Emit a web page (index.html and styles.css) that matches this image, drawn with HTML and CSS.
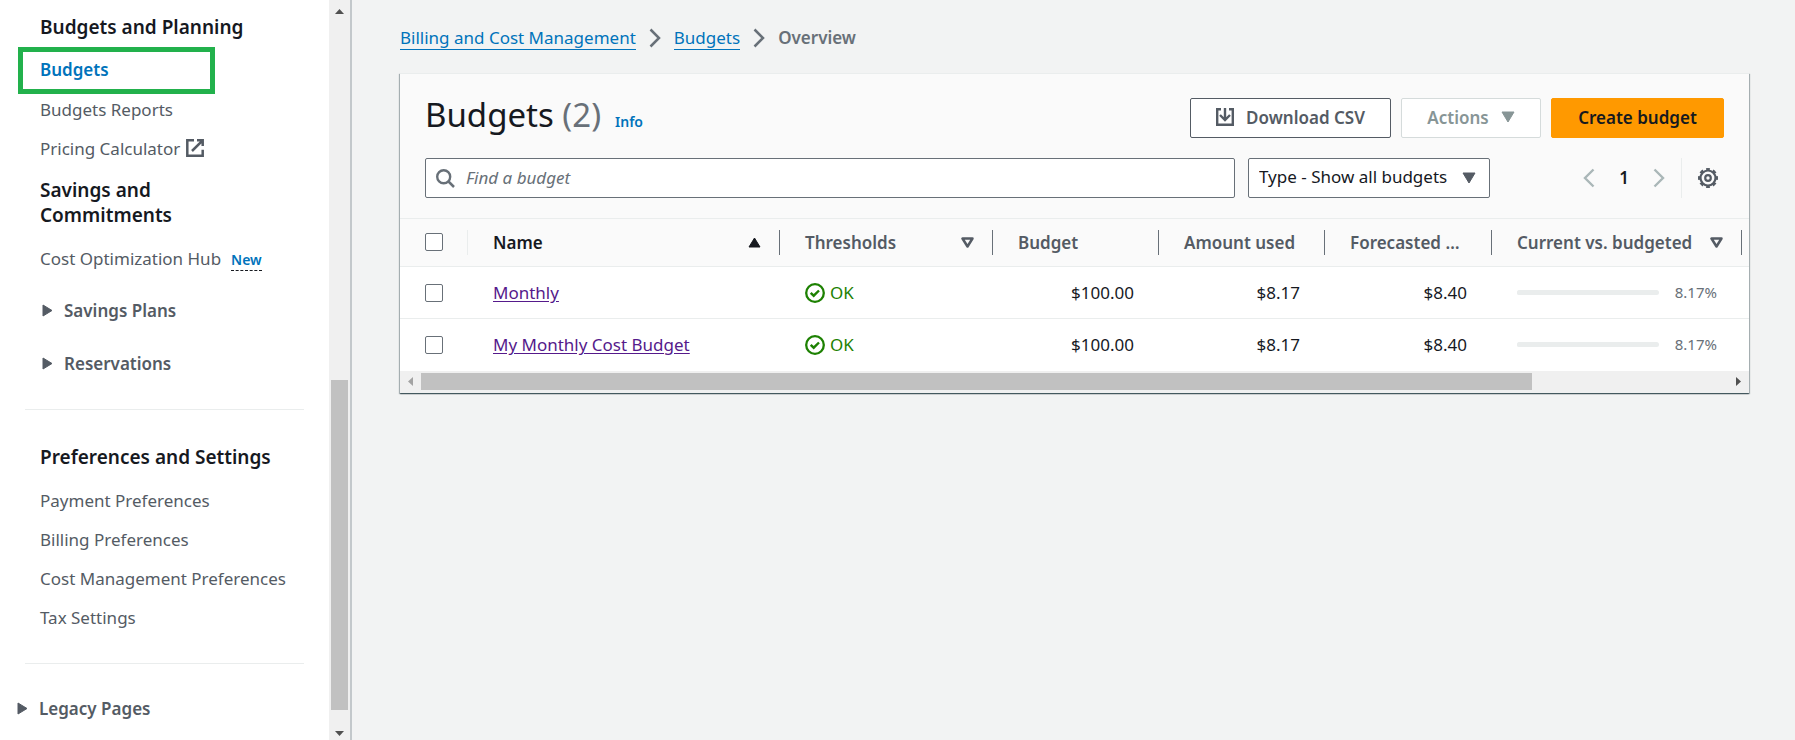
FILE: index.html
```html
<!DOCTYPE html>
<html lang="en">
<head>
<meta charset="utf-8">
<meta name="viewport" content="width=device-width, initial-scale=1">
<title>Budgets - Billing and Cost Management</title>
<link rel="stylesheet" href="styles.css">
</head>
<body>
<div class="app">
  <aside class="sidebar">
    <nav class="nav" aria-label="Billing and Cost Management">
      <section class="nav-section">
        <h2 class="nav-heading">Budgets and Planning</h2>
        <ul class="nav-list">
          <li><a class="nav-link nav-link-active" href="#" aria-current="page">Budgets</a></li>
          <li><a class="nav-link" href="#">Budgets Reports</a></li>
          <li><a class="nav-link" href="#">Pricing Calculator
            <svg class="icon-external" viewBox="0 0 18 18" aria-hidden="true"><path d="M8 1.300H1.300v15.400h15.400v-6M11 1.300h5.700v5.700M16.700 1.300 6 12" fill="none" stroke="currentColor" stroke-width="2.500"/></svg></a></li>
        </ul>
      </section>
      <section class="nav-section nav-section-savings">
        <h2 class="nav-heading nav-heading-narrow">Savings and Commitments</h2>
        <ul class="nav-list">
          <li><a class="nav-link" href="#">Cost Optimization Hub</a><button class="new-tag" type="button">New</button></li>
        </ul>
        <button class="nav-group" type="button" aria-expanded="false"><svg class="caret" viewBox="0 0 11 13" aria-hidden="true"><path d="M1 1v11l9-5.500z" fill="currentColor" stroke="currentColor" stroke-linejoin="round"/></svg>Savings Plans</button>
        <button class="nav-group" type="button" aria-expanded="false"><svg class="caret" viewBox="0 0 11 13" aria-hidden="true"><path d="M1 1v11l9-5.500z" fill="currentColor" stroke="currentColor" stroke-linejoin="round"/></svg>Reservations</button>
      </section>
      <hr class="nav-divider">
      <section class="nav-section nav-section-prefs">
        <h2 class="nav-heading">Preferences and Settings</h2>
        <ul class="nav-list">
          <li><a class="nav-link" href="#">Payment Preferences</a></li>
          <li><a class="nav-link" href="#">Billing Preferences</a></li>
          <li><a class="nav-link" href="#">Cost Management Preferences</a></li>
          <li><a class="nav-link" href="#">Tax Settings</a></li>
        </ul>
      </section>
      <hr class="nav-divider">
      <button class="nav-group nav-group-root" type="button" aria-expanded="false"><svg class="caret" viewBox="0 0 11 13" aria-hidden="true"><path d="M1 1v11l9-5.500z" fill="currentColor" stroke="currentColor" stroke-linejoin="round"/></svg>Legacy Pages</button>
    </nav>
    <div class="vscroll" aria-hidden="true">
      <svg class="vscroll-arrow" viewBox="0 0 9 5"><path d="M0 5h9L4.500 0z" fill="#505050"/></svg>
      <div class="vscroll-track"><div class="vscroll-thumb"></div></div>
      <svg class="vscroll-arrow" viewBox="0 0 9 5"><path d="M0 0h9L4.500 5z" fill="#505050"/></svg>
    </div>
  </aside>

  <main class="main">
    <nav class="breadcrumbs" aria-label="Breadcrumbs">
      <a class="crumb" href="#">Billing and Cost Management</a>
      <svg class="crumb-sep" viewBox="0 0 12 20" aria-hidden="true"><path d="M1.500 1.500 10 10l-8.500 8.500" fill="none" stroke="currentColor" stroke-width="2.500"/></svg>
      <a class="crumb" href="#">Budgets</a>
      <svg class="crumb-sep" viewBox="0 0 12 20" aria-hidden="true"><path d="M1.500 1.500 10 10l-8.500 8.500" fill="none" stroke="currentColor" stroke-width="2.500"/></svg>
      <span class="crumb-current">Overview</span>
    </nav>

    <section class="panel">
      <header class="panel-header">
        <div class="title-row">
          <h1 class="title">Budgets <span class="count">(2)</span></h1>
          <a class="info" href="#">Info</a>
          <div class="actions">
            <button class="btn btn-download" type="button">
              <svg class="icon-download" viewBox="0 0 18 18" aria-hidden="true"><path d="M5 1.200H1.200v15.600h15.600V1.200H13M9 0v11.500M4 7l5 5 5-5" fill="none" stroke="currentColor" stroke-width="2.400"/></svg>
              Download CSV</button>
            <button class="btn btn-disabled" type="button" disabled>Actions
              <svg class="caret-down" viewBox="0 0 14 12" aria-hidden="true"><path d="M1 1h12L7 11z" fill="currentColor" stroke="currentColor" stroke-linejoin="round"/></svg></button>
            <button class="btn btn-primary" type="button">Create budget</button>
          </div>
        </div>
        <div class="tools">
          <label class="search">
            <svg class="icon-search" viewBox="0 0 19 19" aria-hidden="true"><circle cx="7.700" cy="7.700" r="6.500" fill="none" stroke="currentColor" stroke-width="2.400"/><path d="m12.500 12.500 5.500 5.500" stroke="currentColor" stroke-width="2.500"/></svg>
            <input class="search-input" type="text" placeholder="Find a budget" aria-label="Find a budget">
          </label>
          <div class="select-wrap">
            <select class="select" aria-label="Budget type"><option>Type - Show all budgets</option></select>
            <svg class="caret-down select-caret" viewBox="0 0 14 12" aria-hidden="true"><path d="M1 1h12L7 11z" fill="currentColor" stroke="currentColor" stroke-linejoin="round"/></svg>
          </div>
          <div class="pager">
            <button class="icon-btn" type="button" aria-label="Previous page" disabled><svg class="chevron" viewBox="0 0 12 20"><path d="M10.500 1.500 2 10l8.500 8.500" fill="none" stroke="currentColor" stroke-width="2.400"/></svg></button>
            <button class="page" type="button">1</button>
            <button class="icon-btn" type="button" aria-label="Next page" disabled><svg class="chevron" viewBox="0 0 12 20"><path d="M1.500 1.500 10 10l-8.500 8.500" fill="none" stroke="currentColor" stroke-width="2.400"/></svg></button>
          </div>
          <div class="prefs">
            <button class="icon-btn icon-btn-dark" type="button" aria-label="Preferences"><svg class="icon-gear" viewBox="0 0 20 20" fill="none" stroke="currentColor"><circle cx="10" cy="10" r="7.500" stroke-width="2.200"/><circle cx="10" cy="10" r="8.900" stroke-width="2.200" pathLength="160" stroke-dasharray="11 9" stroke-dashoffset="5.500"/><circle cx="10" cy="10" r="2.800" stroke-width="2.200"/></svg></button>
          </div>
        </div>
      </header>

      <table class="table">
        <colgroup><col class="c-check"><col class="c-name"><col class="c-thresh"><col class="c-num"><col class="c-num"><col class="c-forecast"><col class="c-current"><col class="c-more"></colgroup>
        <thead>
          <tr>
            <th class="th-check"><input class="check" type="checkbox" aria-label="Select all budgets"></th>
            <th><div class="th-inner th-sorted">Name<svg class="sort" viewBox="0 0 13 11" aria-hidden="true"><path d="M1 10h11L6.500 1z" fill="currentColor" stroke="currentColor" stroke-linejoin="round"/></svg></div></th>
            <th><div class="th-inner">Thresholds<svg class="sort" viewBox="0 0 13 11" aria-hidden="true"><path d="M1.500 1.500h10l-5 8z" fill="none" stroke="currentColor" stroke-width="2.500" stroke-linejoin="round"/></svg></div></th>
            <th><div class="th-inner">Budget</div></th>
            <th><div class="th-inner">Amount used</div></th>
            <th><div class="th-inner">Forecasted …</div></th>
            <th><div class="th-inner">Current vs. budgeted<svg class="sort" viewBox="0 0 13 11" aria-hidden="true"><path d="M1.500 1.500h10l-5 8z" fill="none" stroke="currentColor" stroke-width="2.500" stroke-linejoin="round"/></svg></div></th>
            <td></td>
          </tr>
        </thead>
        <tbody>
          <tr>
            <td><input class="check" type="checkbox" aria-label="Select Monthly"></td>
            <td><a class="budget-link" href="#">Monthly</a></td>
            <td><span class="status"><svg class="icon-ok" viewBox="0 0 20 20" aria-hidden="true"><circle cx="10" cy="10" r="8.800" fill="none" stroke="currentColor" stroke-width="2.300"/><path d="m5.700 9.800 3 2.900 5.300-5.200" fill="none" stroke="currentColor" stroke-width="2.400"/></svg>OK</span></td>
            <td class="num">$100.00</td>
            <td class="num">$8.17</td>
            <td class="num">$8.40</td>
            <td><div class="usage"><progress class="bar" max="100" value="8.17" aria-label="Current vs. budgeted"></progress><span class="pct">8.17%</span></div></td>
            <td></td>
          </tr>
          <tr>
            <td><input class="check" type="checkbox" aria-label="Select My Monthly Cost Budget"></td>
            <td><a class="budget-link" href="#">My Monthly Cost Budget</a></td>
            <td><span class="status"><svg class="icon-ok" viewBox="0 0 20 20" aria-hidden="true"><circle cx="10" cy="10" r="8.800" fill="none" stroke="currentColor" stroke-width="2.300"/><path d="m5.700 9.800 3 2.900 5.300-5.200" fill="none" stroke="currentColor" stroke-width="2.400"/></svg>OK</span></td>
            <td class="num">$100.00</td>
            <td class="num">$8.17</td>
            <td class="num">$8.40</td>
            <td><div class="usage"><progress class="bar" max="100" value="8.17" aria-label="Current vs. budgeted"></progress><span class="pct">8.17%</span></div></td>
            <td></td>
          </tr>
        </tbody>
      </table>
      <div class="hscroll" aria-hidden="true">
        <svg class="hscroll-arrow" viewBox="0 0 5 9"><path d="M5 0v9L0 4.500z" fill="#a3a3a3"/></svg>
        <div class="hscroll-track"><div class="hscroll-thumb"></div></div>
        <svg class="hscroll-arrow" viewBox="0 0 5 9"><path d="M0 0v9l5-4.500z" fill="#505050"/></svg>
      </div>
    </section>
  </main>
</div>
</body>
</html>
```

FILE: styles.css
```css
* {
  box-sizing: border-box;
}

body {
  margin: 0;
  background: #f2f3f3;
  color: #16191f;
  font-family: "Noto Sans", "Open Sans", sans-serif;
  font-size: 17px;
  line-height: 25px;
}

button,
input,
select {
  font: inherit;
}

svg {
  flex: none;
}

.app {
  display: flex;
  min-height: 100vh;
}

/* Sidebar */

.sidebar {
  display: flex;
  flex: none;
  width: 352px;
  background: #fff;
  border-right: 2px solid #c3c8cb;
}

.nav {
  flex: 1;
  padding: 15px 25px 0;
}

.nav-section {
  padding: 0 15px;
}

.nav-section-savings {
  padding-top: 17px;
}

.nav-section-prefs {
  padding-top: 35px;
  padding-bottom: 33px;
}

.nav-heading {
  margin: 0;
  font-size: 19px;
  line-height: 25px;
  font-weight: 600;
  white-space: nowrap;
}

.nav-heading-narrow {
  max-width: 160px;
  white-space: normal;
}

.nav-list {
  display: flex;
  flex-direction: column;
  gap: 14px;
  margin: 0;
  padding: 18px 0 0;
  list-style: none;
  white-space: nowrap;
}

.nav-link {
  color: #545b64;
  text-decoration: none;
}

.nav-link-active {
  display: block;
  width: 197px;
  margin: -11px 0 -11px -22px;
  padding: 5px 17px 7px;
  border: 5px solid #22b14c;
  color: #0073bb;
  font-weight: 600;
}

.icon-external {
  width: 18px;
  height: 18px;
  margin-left: 1px;
  vertical-align: -2px;
}

.new-tag {
  margin-left: 10px;
  padding: 0;
  border: 0;
  border-bottom: 1px dashed #16191f;
  background: none;
  color: #0073bb;
  font-size: 14px;
  line-height: 21px;
  font-weight: 600;
}

.nav-group {
  display: flex;
  align-items: center;
  gap: 11px;
  margin-top: 28px;
  padding: 0 0 0 2px;
  border: 0;
  background: none;
  color: #545b64;
  font-weight: 600;
}

.nav-list + .nav-group {
  margin-top: 27px;
}

.nav-group-root {
  margin: 32px 0 0 -8px;
  padding: 0;
}

.caret {
  width: 11px;
  height: 13px;
}

.nav-divider {
  height: 1px;
  margin: 33px 0 0;
  border: 0;
  background: #eaeded;
}

.nav-section-prefs + .nav-divider {
  margin-top: 0;
}

.vscroll {
  display: flex;
  flex-direction: column;
  align-items: center;
  gap: 9px;
  width: 21px;
  padding: 9px 2px 4px;
  background: #f0f0f0;
}

.vscroll-arrow {
  width: 9px;
  height: 5px;
}

.vscroll-track {
  display: flex;
  flex: 1;
  flex-direction: column;
  justify-content: flex-end;
  width: 17px;
  padding-bottom: 12px;
}

.vscroll-thumb {
  height: 48%;
  background: #c1c1c1;
}

/* Main area */

.main {
  flex: 1;
  min-width: 0;
  padding: 25px 46px 25px 48px;
}

.breadcrumbs {
  display: flex;
  align-items: center;
  gap: 13px;
  margin-bottom: 23px;
  color: #687078;
}

.crumb {
  border-bottom: 1px solid #0073bb;
  color: #0073bb;
  line-height: 23px;
  text-decoration: none;
}

.crumb-sep {
  width: 12px;
  height: 20px;
}

.crumb-current {
  font-weight: 600;
}

.panel {
  border-top: 1px solid #eaeded;
  background: #fff;
  box-shadow: 0 1px 1px 0 rgba(0, 28, 36, 0.5), 1px 1px 1px 0 rgba(0, 28, 36, 0.25), -1px 1px 1px 0 rgba(0, 28, 36, 0.25);
}

.panel-header {
  padding: 24px 25px 20px;
  background: #fafafa;
}

.title-row {
  display: flex;
  align-items: baseline;
  gap: 14px;
}

.title {
  margin: 0;
  font-size: 33px;
  line-height: 34px;
  font-weight: 400;
}

.count {
  color: #687078;
}

.info {
  color: #0073bb;
  font-size: 14px;
  font-weight: 600;
  text-decoration: none;
}

.actions {
  display: flex;
  align-self: flex-start;
  gap: 10px;
  margin-left: auto;
}

.btn {
  display: flex;
  align-items: center;
  justify-content: center;
  gap: 12px;
  height: 40px;
  padding: 0 20px 2px;
  border: 1px solid #545b64;
  border-radius: 2px;
  background: #fff;
  color: #545b64;
  font-weight: 600;
}

.btn-download {
  min-width: 201px;
}

.btn-disabled {
  min-width: 140px;
  border-color: #d5dbdb;
  color: #879596;
}

.btn-primary {
  min-width: 173px;
  border-color: #f90;
  background: #f90;
  color: #16191f;
}

.icon-download {
  width: 18px;
  height: 18px;
}

.caret-down {
  width: 14px;
  height: 12px;
}

.tools {
  display: flex;
  align-items: center;
  margin-top: 20px;
}

.search {
  display: flex;
  flex: 1;
  align-items: center;
  gap: 11px;
  height: 40px;
  margin-right: 13px;
  padding: 0 10px;
  border: 1px solid #687078;
  border-radius: 2px;
  background: #fff;
  color: #687078;
}

.icon-search {
  width: 19px;
  height: 19px;
}

.search-input {
  flex: 1;
  min-width: 0;
  padding: 0 0 2px;
  border: 0;
  outline: 0;
  background: none;
  color: #16191f;
}

.search-input::placeholder {
  color: #687078;
  font-style: italic;
  opacity: 1;
}

.select-wrap {
  position: relative;
  width: 242px;
}

.select {
  display: block;
  width: 100%;
  height: 40px;
  padding: 0 30px 3px 10px;
  border: 1px solid #687078;
  border-radius: 2px;
  appearance: none;
  background: #fff;
  color: #16191f;
}

.select-caret {
  position: absolute;
  top: 14px;
  right: 14px;
  color: #545b64;
  pointer-events: none;
}

.pager {
  display: flex;
  align-items: center;
  gap: 15px;
  margin-left: 89px;
}

.icon-btn {
  display: flex;
  justify-content: center;
  width: 20px;
  padding: 0;
  border: 0;
  background: none;
  color: #aab7b8;
}

.icon-btn-dark {
  color: #545b64;
}

.chevron {
  width: 12px;
  height: 20px;
}

.page {
  width: 20px;
  padding: 0 0 2px;
  border: 0;
  background: none;
  color: #16191f;
  font-weight: 600;
}

.prefs {
  display: flex;
  align-items: center;
  height: 40px;
  margin-left: 12px;
  padding: 0 6px 0 16px;
  border-left: 1px solid #eaeded;
}

.icon-gear {
  width: 20px;
  height: 20px;
}

/* Budgets table */

.table {
  width: 100%;
  border-collapse: collapse;
  table-layout: fixed;
}

.c-check {
  width: 68px;
}

.c-thresh {
  width: 213px;
}

.c-num {
  width: 166px;
}

.c-forecast {
  width: 167px;
}

.c-current {
  width: 250px;
}

.c-more {
  width: 7px;
}

.table th,
.table td {
  padding: 0 25px;
  text-align: left;
}

.table thead tr {
  height: 48px;
  border-top: 1px solid #eaeded;
  background: #fafafa;
  color: #545b64;
}

.table tbody tr {
  height: 52px;
  border-top: 1px solid #eaeded;
}

.table thead td,
.table tbody td:last-child {
  padding: 0;
}

.table th {
  padding-right: 0;
  padding-bottom: 1px;
  font-weight: 600;
  white-space: nowrap;
}

.th-inner {
  display: flex;
  align-items: center;
  justify-content: space-between;
  padding-right: 18px;
  border-right: 1px solid #687078;
}

.th-sorted {
  color: #16191f;
}

.th-check {
  background: linear-gradient(#eaeded, #eaeded) right center / 1px 25px no-repeat;
}

.sort {
  width: 13px;
  height: 11px;
}

.check {
  display: block;
  width: 18px;
  height: 18px;
  margin: 0;
  border: 1px solid #687078;
  border-radius: 2px;
  appearance: none;
  background: #fff;
}

.budget-link {
  color: #551a8b;
  text-underline-offset: 2px;
}

.status {
  display: flex;
  align-items: center;
  gap: 5px;
  color: #1d8102;
}

.icon-ok {
  width: 20px;
  height: 20px;
}

.table .num {
  text-align: right;
}

.usage {
  display: flex;
  align-items: center;
  gap: 16px;
}

.bar {
  flex: 1;
  min-width: 0;
  height: 5px;
  border: 0;
  border-radius: 3px;
  appearance: none;
  background: #eaeded;
  overflow: hidden;
}

.bar::-webkit-progress-bar,
.bar::-webkit-progress-value {
  background: #eaeded;
}

.pct {
  color: #687078;
  font-size: 15px;
}

.hscroll {
  display: flex;
  align-items: center;
  gap: 8px;
  height: 22px;
  padding: 2px 8px;
  background: #f0f0f0;
}

.hscroll-arrow {
  width: 5px;
  height: 9px;
}

.hscroll-track {
  flex: 1;
}

.hscroll-thumb {
  width: 85%;
  height: 17px;
  background: #c1c1c1;
}
```
